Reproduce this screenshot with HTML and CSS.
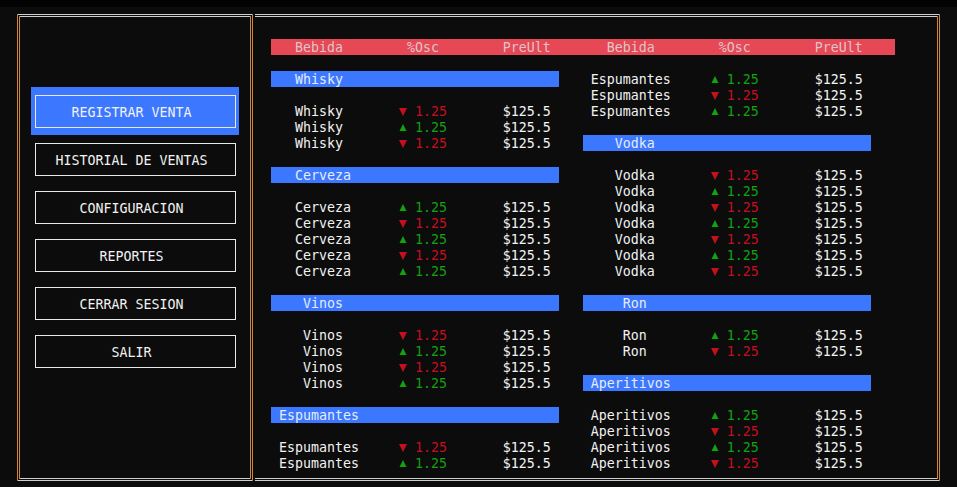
FILE: index.html
```html
<!DOCTYPE html>
<html lang="es">
<head>
<meta charset="utf-8">
<title>Ventas</title>
<link rel="stylesheet" href="styles.css">
</head>
<body>
<div class="topbar"></div>
<div class="frame">
  <nav class="sidebar">
    <div class="menu-item active"><span class="menu-box">REGISTRAR VENTA</span></div>
    <div class="menu-item"><span class="menu-box">HISTORIAL DE VENTAS</span></div>
    <div class="menu-item"><span class="menu-box">CONFIGURACION</span></div>
    <div class="menu-item"><span class="menu-box">REPORTES</span></div>
    <div class="menu-item"><span class="menu-box">CERRAR SESION</span></div>
    <div class="menu-item"><span class="menu-box">SALIR</span></div>
  </nav>
  <main class="panel">
    <div class="head">
      <div class="head-half"><span class="h-name">Bebida</span><span class="h-osc">%Osc</span><span class="h-price">PreUlt</span></div>
      <div class="head-half"><span class="h-name">Bebida</span><span class="h-osc">%Osc</span><span class="h-price">PreUlt</span></div>
    </div>
    <div class="columns">
      <div class="col">
        <div class="group">
          <div class="cat"><span class="cat-name">Whisky</span></div>
          <div class="row"><span class="name">Whisky</span><svg class="tri down" viewBox="0 0 8 8"><polygon points="0,0 8,0 4,8"/></svg><span class="num down">1.25</span><span class="price">$125.5</span></div>
          <div class="row"><span class="name">Whisky</span><svg class="tri up" viewBox="0 0 8 8"><polygon points="4,0 8,8 0,8"/></svg><span class="num up">1.25</span><span class="price">$125.5</span></div>
          <div class="row"><span class="name">Whisky</span><svg class="tri down" viewBox="0 0 8 8"><polygon points="0,0 8,0 4,8"/></svg><span class="num down">1.25</span><span class="price">$125.5</span></div>
        </div>
        <div class="group">
          <div class="cat"><span class="cat-name odd">Cerveza</span></div>
          <div class="row"><span class="name odd">Cerveza</span><svg class="tri up" viewBox="0 0 8 8"><polygon points="4,0 8,8 0,8"/></svg><span class="num up">1.25</span><span class="price">$125.5</span></div>
          <div class="row"><span class="name odd">Cerveza</span><svg class="tri down" viewBox="0 0 8 8"><polygon points="0,0 8,0 4,8"/></svg><span class="num down">1.25</span><span class="price">$125.5</span></div>
          <div class="row"><span class="name odd">Cerveza</span><svg class="tri up" viewBox="0 0 8 8"><polygon points="4,0 8,8 0,8"/></svg><span class="num up">1.25</span><span class="price">$125.5</span></div>
          <div class="row"><span class="name odd">Cerveza</span><svg class="tri down" viewBox="0 0 8 8"><polygon points="0,0 8,0 4,8"/></svg><span class="num down">1.25</span><span class="price">$125.5</span></div>
          <div class="row"><span class="name odd">Cerveza</span><svg class="tri up" viewBox="0 0 8 8"><polygon points="4,0 8,8 0,8"/></svg><span class="num up">1.25</span><span class="price">$125.5</span></div>
        </div>
        <div class="group">
          <div class="cat"><span class="cat-name odd">Vinos</span></div>
          <div class="row"><span class="name odd">Vinos</span><svg class="tri down" viewBox="0 0 8 8"><polygon points="0,0 8,0 4,8"/></svg><span class="num down">1.25</span><span class="price">$125.5</span></div>
          <div class="row"><span class="name odd">Vinos</span><svg class="tri up" viewBox="0 0 8 8"><polygon points="4,0 8,8 0,8"/></svg><span class="num up">1.25</span><span class="price">$125.5</span></div>
          <div class="row"><span class="name odd">Vinos</span><svg class="tri down" viewBox="0 0 8 8"><polygon points="0,0 8,0 4,8"/></svg><span class="num down">1.25</span><span class="price">$125.5</span></div>
          <div class="row"><span class="name odd">Vinos</span><svg class="tri up" viewBox="0 0 8 8"><polygon points="4,0 8,8 0,8"/></svg><span class="num up">1.25</span><span class="price">$125.5</span></div>
        </div>
        <div class="group">
          <div class="cat"><span class="cat-name">Espumantes</span></div>
          <div class="row"><span class="name">Espumantes</span><svg class="tri down" viewBox="0 0 8 8"><polygon points="0,0 8,0 4,8"/></svg><span class="num down">1.25</span><span class="price">$125.5</span></div>
          <div class="row"><span class="name">Espumantes</span><svg class="tri up" viewBox="0 0 8 8"><polygon points="4,0 8,8 0,8"/></svg><span class="num up">1.25</span><span class="price">$125.5</span></div>
        </div>
      </div>
      <div class="col">
        <div class="group">
          <div class="row"><span class="name">Espumantes</span><svg class="tri up" viewBox="0 0 8 8"><polygon points="4,0 8,8 0,8"/></svg><span class="num up">1.25</span><span class="price">$125.5</span></div>
          <div class="row"><span class="name">Espumantes</span><svg class="tri down" viewBox="0 0 8 8"><polygon points="0,0 8,0 4,8"/></svg><span class="num down">1.25</span><span class="price">$125.5</span></div>
          <div class="row"><span class="name">Espumantes</span><svg class="tri up" viewBox="0 0 8 8"><polygon points="4,0 8,8 0,8"/></svg><span class="num up">1.25</span><span class="price">$125.5</span></div>
        </div>
        <div class="group">
          <div class="cat"><span class="cat-name odd">Vodka</span></div>
          <div class="row"><span class="name odd">Vodka</span><svg class="tri down" viewBox="0 0 8 8"><polygon points="0,0 8,0 4,8"/></svg><span class="num down">1.25</span><span class="price">$125.5</span></div>
          <div class="row"><span class="name odd">Vodka</span><svg class="tri up" viewBox="0 0 8 8"><polygon points="4,0 8,8 0,8"/></svg><span class="num up">1.25</span><span class="price">$125.5</span></div>
          <div class="row"><span class="name odd">Vodka</span><svg class="tri down" viewBox="0 0 8 8"><polygon points="0,0 8,0 4,8"/></svg><span class="num down">1.25</span><span class="price">$125.5</span></div>
          <div class="row"><span class="name odd">Vodka</span><svg class="tri up" viewBox="0 0 8 8"><polygon points="4,0 8,8 0,8"/></svg><span class="num up">1.25</span><span class="price">$125.5</span></div>
          <div class="row"><span class="name odd">Vodka</span><svg class="tri down" viewBox="0 0 8 8"><polygon points="0,0 8,0 4,8"/></svg><span class="num down">1.25</span><span class="price">$125.5</span></div>
          <div class="row"><span class="name odd">Vodka</span><svg class="tri up" viewBox="0 0 8 8"><polygon points="4,0 8,8 0,8"/></svg><span class="num up">1.25</span><span class="price">$125.5</span></div>
          <div class="row"><span class="name odd">Vodka</span><svg class="tri down" viewBox="0 0 8 8"><polygon points="0,0 8,0 4,8"/></svg><span class="num down">1.25</span><span class="price">$125.5</span></div>
        </div>
        <div class="group">
          <div class="cat"><span class="cat-name odd">Ron</span></div>
          <div class="row"><span class="name odd">Ron</span><svg class="tri up" viewBox="0 0 8 8"><polygon points="4,0 8,8 0,8"/></svg><span class="num up">1.25</span><span class="price">$125.5</span></div>
          <div class="row"><span class="name odd">Ron</span><svg class="tri down" viewBox="0 0 8 8"><polygon points="0,0 8,0 4,8"/></svg><span class="num down">1.25</span><span class="price">$125.5</span></div>
        </div>
        <div class="group">
          <div class="cat"><span class="cat-name">Aperitivos</span></div>
          <div class="row"><span class="name">Aperitivos</span><svg class="tri up" viewBox="0 0 8 8"><polygon points="4,0 8,8 0,8"/></svg><span class="num up">1.25</span><span class="price">$125.5</span></div>
          <div class="row"><span class="name">Aperitivos</span><svg class="tri down" viewBox="0 0 8 8"><polygon points="0,0 8,0 4,8"/></svg><span class="num down">1.25</span><span class="price">$125.5</span></div>
          <div class="row"><span class="name">Aperitivos</span><svg class="tri up" viewBox="0 0 8 8"><polygon points="4,0 8,8 0,8"/></svg><span class="num up">1.25</span><span class="price">$125.5</span></div>
          <div class="row"><span class="name">Aperitivos</span><svg class="tri down" viewBox="0 0 8 8"><polygon points="0,0 8,0 4,8"/></svg><span class="num down">1.25</span><span class="price">$125.5</span></div>
        </div>
      </div>
    </div>
  </main>
</div>
</body>
</html>
```
FILE: styles.css
```css
* { box-sizing: border-box; }

html, body {
  margin: 0;
  padding: 0;
  background: #0c0c0c;
  color: #f2f2f2;
  font-family: "DejaVu Sans Mono", "Liberation Mono", monospace;
  font-size: 13.29px;
  line-height: 16px;
  height: 487px;
  overflow: hidden;
}

.topbar {
  height: 7px;
  background: #030303;
}

.frame {
  display: flex;
  padding: 7px 0 0 17px;
}

.sidebar {
  width: 236px;
  height: 467px;
  border: 3px double #cfcfcf;
  border-left-color: #d0863a;
  border-right-color: #d0863a;
  padding: 70px 11px 0;
  display: flex;
  flex-direction: column;
}

.menu-item {
  height: 48px;
  padding: 8px 3px 7px 4px;
}

.menu-item.active {
  background: #3b78ff;
}

.menu-box {
  display: flex;
  align-items: center;
  justify-content: center;
  height: 33px;
  border: 1px solid #e8e8e8;
  padding: 2px 8px 0 0;
  color: #f2f2f2;
}

.panel {
  margin-left: 2px;
  width: 685px;
  height: 467px;
  border-top: 3px double #cfcfcf;
  border-bottom: 3px double #cfcfcf;
  border-right: 3px double #d0863a;
  padding: 22px 0 0 16px;
}

.head {
  display: flex;
  width: 78ch;
  height: 16px;
  line-height: 18px;
  background: #e74856;
  color: #e0c4c8;
  margin-bottom: 16px;
}

.head-half {
  display: grid;
  grid-template-columns: 12ch 5ch 12ch 10ch;
  width: 39ch;
}

.h-name { grid-column: 1; text-align: center; }
.h-osc { grid-column: 3; }
.h-price { grid-column: 4; }

.columns {
  display: flex;
  gap: 3ch;
}

.col {
  width: 36ch;
}

.group {
  margin-bottom: 16px;
}

.cat {
  background: #3b78ff;
  color: #e6ecfa;
  margin-bottom: 16px;
  height: 16px;
  line-height: 18px;
}

.cat-name {
  display: inline-block;
  width: 12ch;
  text-align: center;
}

.odd { padding-left: 1ch; }

.row {
  display: grid;
  grid-template-columns: 12ch 4ch 2ch 11ch 7ch;
  grid-template-rows: 16px;
  height: 16px;
  line-height: 18px;
  white-space: nowrap;
}

.name { grid-column: 1; text-align: center; }
.tri {
  grid-column: 3;
  display: block;
  width: 8px;
  height: 8px;
  margin-top: 5px;
  fill: currentColor;
}
.tri.up { height: 7px; width: 8px; margin-top: 5px; }
.num { grid-column: 4; }
.price { grid-column: 5; }

.up { color: #13a10e; }
.down { color: #c50f1f; }
```
